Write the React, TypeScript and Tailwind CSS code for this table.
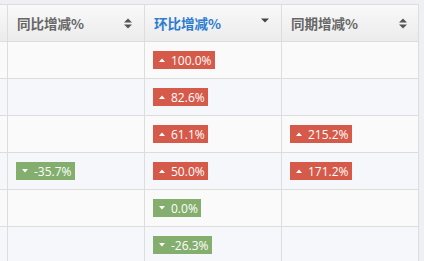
import React from "react";

type B = { v: string; up: boolean } | null;

const rows: B[][] = [
  [null, { v: "100.0%", up: true }, null],
  [null, { v: "82.6%", up: true }, null],
  [null, { v: "61.1%", up: true }, { v: "215.2%", up: true }],
  [{ v: "-35.7%", up: false }, { v: "50.0%", up: true }, { v: "171.2%", up: true }],
  [null, { v: "0.0%", up: false }, null],
  [null, { v: "-26.3%", up: false }, null],
];

function Badge({ b }: { b: { v: string; up: boolean } }) {
  return (
    <span
      className={`inline-flex h-[18px] items-center pl-[6px] pr-[3px] text-[12px] leading-none text-white ${
        b.up ? "bg-[#d65a4a]" : "bg-[#84ae6d]"
      }`}
      style={{ fontFamily: '"Open Sans", sans-serif' }}
    >
      <svg width="6" height="4" viewBox="0 0 6 4" className="mr-[6px]">
        {b.up ? <path d="M0 4 L3 0.5 L6 4 Z" fill="#fff" /> : <path d="M0 0 L6 0 L3 3.5 Z" fill="#fff" />}
      </svg>
      <span className="pt-[1px]">{b.v}</span>
    </span>
  );
}

function SortBoth() {
  return (
    <svg width="8" height="11" viewBox="0 0 8 11">
      <path d="M0 4.5 L4 0.5 L8 4.5 Z" fill="#555" />
      <path d="M0 6.5 L8 6.5 L4 10.5 Z" fill="#555" />
    </svg>
  );
}

function SortDown() {
  return (
    <svg width="8" height="5" viewBox="0 0 8 5">
      <path d="M0 0.5 L8 0.5 L4 4.5 Z" fill="#444" />
    </svg>
  );
}

const cjk = { fontFamily: '"Noto Sans CJK SC", "Noto Sans", sans-serif' };

export default function App() {
  return (
    <div className="h-[261px] w-[424px] overflow-hidden bg-[#eef0f4] pt-[4px]">
      <div className="w-[419px] border-t border-[#dddddd]">
        <div className="grid h-[37px] grid-cols-[8px_137px_137px_137px] bg-linear-to-b from-[#f9f9f9] to-[#ebebeb]">
          <div className="border-r border-b border-[#dddddd]" />
          <div className="flex items-center justify-between border-r border-b border-[#dddddd] pl-[9px] pr-[12px]">
            <span className="text-[13.5px] font-bold text-[#666666]" style={cjk}>
              同比增减%
            </span>
            <SortBoth />
          </div>
          <div className="flex items-center justify-between border-r border-b border-[#dddddd] pl-[9px] pr-[12px]">
            <span className="text-[13.5px] font-bold text-[#2b7bd0]" style={cjk}>
              环比增减%
            </span>
            <span className="-mt-[5px] flex">
              <SortDown />
            </span>
          </div>
          <div className="flex items-center justify-between border-r border-b border-[#dddddd] pl-[9px] pr-[11px]">
            <span className="text-[13.5px] font-bold text-[#666666]" style={cjk}>
              同期增减%
            </span>
            <SortBoth />
          </div>
        </div>
        {rows.map((r, i) => (
          <div
            key={i}
            className={`grid h-[37px] grid-cols-[8px_137px_137px_137px] ${
              i % 2 === 0 ? "bg-[#fafafa]" : "bg-[#f5f7fa]"
            }`}
          >
            <div className="border-r border-b border-[#dddddd]" />
            {r.map((c, j) => (
              <div key={j} className="flex items-center border-r border-b border-[#dddddd] pl-[8px]">
                {c && <Badge b={c} />}
              </div>
            ))}
          </div>
        ))}
      </div>
    </div>
  );
}
